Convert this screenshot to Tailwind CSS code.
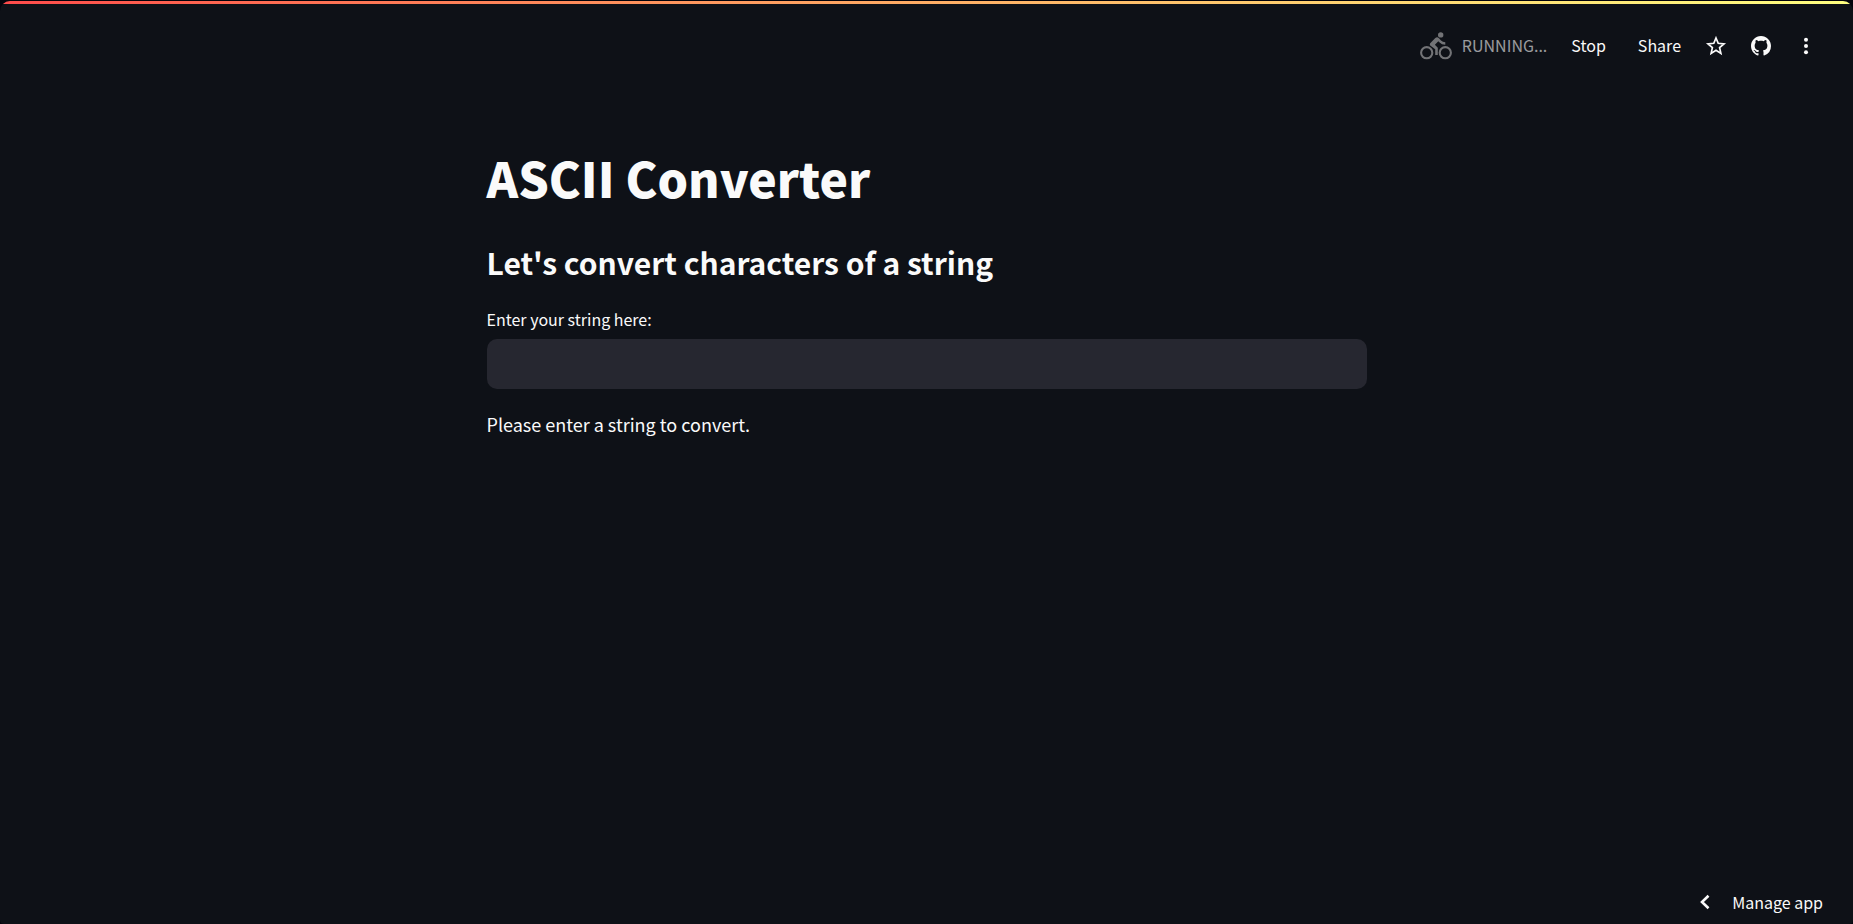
<!DOCTYPE html>
<html lang="en">
<head>
<meta charset="utf-8">
<meta name="viewport" content="width=device-width, initial-scale=1">
<title>ASCII Converter</title>
<script src="https://cdn.jsdelivr.net/npm/@tailwindcss/browser@4"></script>
</head>
<body class="bg-[#04040c] font-['Noto_Sans_CJK_JP','Noto_Sans_CJK_SC',sans-serif] text-[#fafafa]">
<div class="flex min-h-screen flex-col pt-px">
  <div class="flex grow flex-col overflow-hidden rounded-t-[10px] rounded-b-sm bg-[#0e1117]">
    <div class="h-[3px] bg-linear-to-r from-[#ff4b4b] to-[#ffff80]"></div>
    <header class="flex h-[84px] items-center justify-end pr-[35px] text-base leading-6">
      <div class="flex items-center gap-2.5 text-[#fafafa]/60">
        <svg class="w-8 h-7" viewBox="0 0 32 28" fill="none" stroke="#727376" aria-hidden="true">
          <circle cx="6.7" cy="20.7" r="5.6" stroke-width="2.1"/>
          <circle cx="25.3" cy="20.7" r="5.6" stroke-width="2.1"/>
          <circle cx="20.7" cy="2.9" r="2.7" fill="#727376" stroke="none"/>
          <path d="M10.2 11.2L15.3 6Q17.2 4.4 19 6.2L21 8.4Q22.7 10.2 25.3 10.2V12.8Q21.7 12.8 19.3 10.3L18.3 9.2L14.9 12.7L17.8 15.7V23H15.2V17.2L10.2 13.4Q9.2 12.3 10.2 11.2Z" fill="#727376" stroke="none"/>
        </svg>
        <span class="pb-0.5">RUNNING...</span>
      </div>
      <button class="ml-6 cursor-pointer pb-0.5" type="button">Stop</button>
      <button class="ml-8 cursor-pointer pb-0.5" type="button">Share</button>
      <button class="ml-[23px] cursor-pointer" type="button" aria-label="Favorite">
        <svg class="size-6" viewBox="0 0 24 24" fill="none" stroke="#fafafa" stroke-width="1.7" aria-hidden="true"><path d="M12 4L14.2 9.3L20 9.8L15.6 13.6L16.9 19.4L12 16.3L7.1 19.4L8.4 13.6L4 9.8L9.8 9.3Z"/></svg>
      </button>
      <a class="ml-[23px]" href="#" aria-label="View source on GitHub">
        <svg class="size-5" viewBox="0 0 16 16" fill="#fafafa" aria-hidden="true"><path d="M8 0C3.58 0 0 3.58 0 8c0 3.54 2.29 6.53 5.47 7.59.4.07.55-.17.55-.38 0-.19-.01-.82-.01-1.49-2.01.37-2.53-.49-2.69-.94-.09-.23-.48-.94-.82-1.13-.28-.15-.68-.52-.01-.53.63-.01 1.08.58 1.23.82.72 1.21 1.87.87 2.33.66.07-.52.28-.87.51-1.07-1.78-.2-3.64-.89-3.64-3.95 0-.87.31-1.59.82-2.15-.08-.2-.36-1.02.08-2.12 0 0 .67-.21 2.2.82.64-.18 1.32-.27 2-.27s1.36.09 2 .27c1.53-1.04 2.2-.82 2.2-.82.44 1.1.16 1.92.08 2.12.51.56.82 1.27.82 2.15 0 3.07-1.87 3.75-3.65 3.95.29.25.54.73.54 1.48 0 1.07-.01 1.93-.01 2.2 0 .21.15.46.55.38A8.01 8.01 0 0 0 16 8c0-4.42-3.58-8-8-8Z"/></svg>
      </a>
      <button class="ml-[23px] cursor-pointer" type="button" aria-label="Main menu">
        <svg class="size-6" viewBox="0 0 24 24" fill="#fafafa" aria-hidden="true"><circle cx="12" cy="5.8" r="2"/><circle cx="12" cy="12" r="2"/><circle cx="12" cy="18.2" r="2"/></svg>
      </button>
    </header>
    <main class="mx-auto w-full max-w-[880px] grow pt-[53px]">
      <h1 class="text-[48px] leading-[72px] font-black">ASCII Converter</h1>
      <h3 class="mt-6 text-[30px] leading-[50px] font-bold">Let's convert characters of a string</h3>
      <label class="mt-5 block text-base leading-6" for="source">Enter your string here:</label>
      <input id="source" type="text" class="mt-2 block h-[50px] w-full rounded-[10px] bg-[#262730] px-4 text-lg outline-none">
      <p class="mt-5 text-lg leading-[30px]">Please enter a string to convert.</p>
    </main>
    <footer class="flex justify-end pr-[30px] pb-2.5">
      <button class="flex cursor-pointer items-center gap-[22px] text-base leading-6" type="button">
        <svg class="w-2.5 h-4" viewBox="0 0 10 16" fill="none" stroke="#fafafa" stroke-width="2.6" aria-hidden="true"><path d="M8.5 1.8L2 8L8.5 14.2"/></svg>
        Manage app
      </button>
    </footer>
  </div>
</div>
</body>
</html>
